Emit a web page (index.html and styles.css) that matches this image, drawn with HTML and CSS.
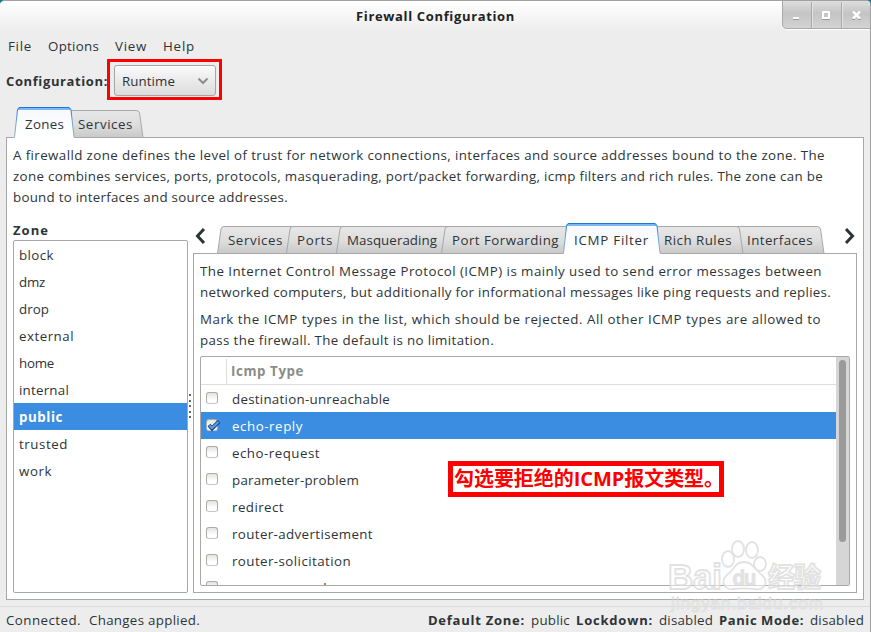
FILE: index.html
```html
<!DOCTYPE html>
<html lang="en">
<head>
<meta charset="utf-8">
<title>Firewall Configuration</title>
<link rel="stylesheet" href="styles.css">
</head>
<body>
<div class="window">
  <header class="titlebar">
    <h1 class="title"><span data-w="159">Firewall Configuration</span></h1>
    <svg class="controls" width="90" height="30" viewBox="0 0 90 30">
      <defs><linearGradient id="wc" x1="0" y1="0" x2="0" y2="1"><stop offset="0" stop-color="#dedede"/><stop offset=".45" stop-color="#c4c4c4"/><stop offset="1" stop-color="#d4d4d4"/></linearGradient></defs>
      <path d="M1.500 0V23Q1.500 28.500 6 28.500H90" fill="none" stroke="#fff"/>
      <path d="M1.500 0H90V27.500H6Q1.500 27.500 1.500 23Z" fill="url(#wc)"/>
      <path d="M1.500 0V23Q1.500 27.500 6 27.500H90" fill="none" stroke="#a9a9a9"/>
      <path d="M30.500 1V27M60.500 1V27" stroke="#a9a9a9"/><path d="M31.500 1V27M61.500 1V27" stroke="#e2e2e2"/>
      <path d="M12 18.500H18M41 18.500H49M71 18.500H74M77 18.500H80" stroke="#999"/>
      <path d="M12 17H18M42 11H48V17H42Z" fill="none" stroke="#fff" stroke-width="2"/>
      <path d="M72 10.500L79 17.500M79 10.500L72 17.500" stroke="#fff" stroke-width="2.400"/>
    </svg>
  </header>
  <nav class="menubar">
    <span class="menu file"><span data-w="24">File</span></span>
    <span class="menu options"><span data-w="51">Options</span></span>
    <span class="menu view"><span data-w="32">View</span></span>
    <span class="menu"><span data-w="32">Help</span></span>
  </nav>
  <div class="config">
    <b class="config-label"><span data-w="102">Configuration:</span></b>
    <div class="highlight">
      <div class="combo"><span data-w="53">Runtime</span>
        <svg width="12" height="8" viewBox="0 0 12 8"><path d="M1.500 1.500L6 6L10.500 1.500" fill="none" stroke="#8b8e8b" stroke-width="2"/></svg>
      </div>
    </div>
  </div>
  <div class="tabs outer-tabs">
    <svg class="tab-shapes" width="150" height="31" viewBox="0 0 150 31">
      <defs>
        <linearGradient id="tab" x1="0" y1="0" x2="0" y2="1"><stop offset="0" stop-color="#e7e7e7"/><stop offset=".5" stop-color="#dedede"/><stop offset="1" stop-color="#c9c9c9"/></linearGradient>
        <linearGradient id="act" x1="0" y1="0" x2="0" y2="1"><stop offset="0" stop-color="#f6f9fd"/><stop offset="1" stop-color="#fff"/></linearGradient>
        <linearGradient id="edge" gradientUnits="userSpaceOnUse" x1="0" y1="0" x2="0" y2="30"><stop offset="0" stop-color="#1b76d8"/><stop offset=".5" stop-color="#6aa5df"/><stop offset="1" stop-color="#a6aaa6"/></linearGradient>
      </defs>
      <path d="M65 3.500H130Q133 3.500 133.500 6L137 30.500H65Z" fill="url(#tab)" stroke="#a6aaa6"/>
      <path d="M8.500 31L11.500 3Q12 .500 14 .500H62Q64.500 .500 65 3L68 31Z" fill="url(#act)"/>
      <path d="M12 2H64" stroke="#7db8f5" stroke-width="2"/>
      <path d="M8.500 30L11.500 3Q12 .500 14 .500H62Q64.500 .500 65 3L68 30" fill="none" stroke="url(#edge)"/>
      <path d="M13 .500H63" stroke="#1b76d8"/>
    </svg>
    <span class="tab t-zones"><span data-w="39">Zones</span></span>
    <span class="tab"><span data-w="55">Services</span></span>
  </div>
  <main class="page">
    <p class="intro">
      <span data-w="812">A firewalld zone defines the level of trust for network connections, interfaces and source addresses bound to the zone. The</span><br>
      <span data-w="810">zone combines services, ports, protocols, masquerading, port/packet forwarding, icmp filters and rich rules. The zone can be</span><br>
      <span data-w="275">bound to interfaces and source addresses.</span>
    </p>
    <div class="split">
      <section class="zones">
        <b class="zone-label"><span data-w="36">Zone</span></b>
        <ul class="zone-list">
          <li><span data-w="35">block</span></li>
          <li><span data-w="26">dmz</span></li>
          <li><span data-w="30">drop</span></li>
          <li><span data-w="55">external</span></li>
          <li><span data-w="35">home</span></li>
          <li><span data-w="50">internal</span></li>
          <li class="selected"><span data-w="44">public</span></li>
          <li><span data-w="49">trusted</span></li>
          <li><span data-w="33">work</span></li>
        </ul>
      </section>
      <div class="handle"><i></i><i></i><i></i><i></i><i></i></div>
      <section class="details">
        <div class="tabs inner-tabs">
          <svg class="tab-shapes" width="664" height="31" viewBox="0 0 664 31">
            <g fill="url(#tab)" stroke="#a6aaa6">
              <path d="M543 3.500H624Q627 3.500 627.500 6L631 30.500H543Z"/>
              <path d="M460 3.500H543Q546 3.500 546.500 6L550 30.500H460Z"/>
              <path d="M24.500 30.500L28 6Q28.500 3.500 31 3.500H110V30.500Z"/>
              <path d="M93.500 30.500L97 6Q97.500 3.500 100 3.500H160V30.500Z"/>
              <path d="M143.500 30.500L147 6Q147.500 3.500 150 3.500H265V30.500Z"/>
              <path d="M248.500 30.500L252 6Q252.500 3.500 255 3.500H374V30.500Z"/>
            </g>
            <path d="M370.500 31L373.500 3Q374 .500 376 .500H461Q463.500 .500 464 3L467 31Z" fill="url(#act)"/>
            <path d="M374 2H463" stroke="#7db8f5" stroke-width="2"/>
            <path d="M370.500 30L373.500 3Q374 .500 376 .500H461Q463.500 .500 464 3L467 30" fill="none" stroke="url(#edge)"/>
            <path d="M375 .500H462" stroke="#1b76d8"/>
            <path d="M11 6L4.500 13L11 20M653 6L659.500 13L653 20" fill="none" stroke="#2e3436" stroke-width="3"/>
          </svg>
          <span class="tab i-services"><span data-w="55">Services</span></span>
          <span class="tab i-ports"><span data-w="36">Ports</span></span>
          <span class="tab i-masq"><span data-w="90">Masquerading</span></span>
          <span class="tab i-forward"><span data-w="107">Port Forwarding</span></span>
          <span class="tab i-icmp"><span data-w="75">ICMP Filter</span></span>
          <span class="tab i-rich"><span data-w="68">Rich Rules</span></span>
          <span class="tab"><span data-w="66">Interfaces</span></span>
        </div>
        <div class="subpage">
          <p><span data-w="622">The Internet Control Message Protocol (ICMP) is mainly used to send error messages between</span><br>
          <span data-w="631">networked computers, but additionally for informational messages like ping requests and replies.</span></p>
          <p><span data-w="621">Mark the ICMP types in the list, which should be rejected. All other ICMP types are allowed to</span><br>
          <span data-w="294">pass the firewall. The default is no limitation.</span></p>
          <div class="icmp">
            <div class="table">
              <div class="thead"><span data-w="73">Icmp Type</span></div>
              <div class="row"><i class="check"></i><span data-w="158">destination-unreachable</span></div>
              <div class="row selected"><i class="check"><svg class="tick" width="16" height="13" viewBox="0 0 16 13"><path d="M3 5L6 8.500L13 1.500" fill="none" stroke="#204a87" stroke-width="4"/><path d="M3.500 5.500L6 8L12.500 2" fill="none" stroke="#5b9fe6" stroke-width="2"/></svg></i><span data-w="71">echo-reply</span></div>
              <div class="row"><i class="check"></i><span data-w="88">echo-request</span></div>
              <div class="row"><i class="check"></i><span data-w="127">parameter-problem</span></div>
              <div class="row"><i class="check"></i><span data-w="52">redirect</span></div>
              <div class="row"><i class="check"></i><span data-w="141">router-advertisement</span></div>
              <div class="row"><i class="check"></i><span data-w="119">router-solicitation</span></div>
              <div class="row"><i class="check"></i><span data-w="100">source-quench</span></div>
            </div>
            <div class="scroll"><div class="thumb"></div></div>
          </div>
        </div>
      </section>
    </div>
  </main>
  <footer class="status">
    <span class="connected"><span data-w="75">Connected.</span></span>
    <span><span data-w="111">Changes applied.</span></span>
    <span class="modes"><b><span data-w="97">Default Zone:</span></b><span data-w="39">public</span><b><span data-w="77">Lockdown:</span></b><span data-w="54">disabled</span><b><span data-w="85">Panic Mode:</span></b><span data-w="54">disabled</span></span>
  </footer>
  <div class="note"><span data-w="270">勾选要拒绝的ICMP报文类型。</span></div>
  <svg class="watermark" width="170" height="80" viewBox="0 0 170 80">
    <g fill="#fff" fill-opacity=".65" stroke="#dedede" stroke-width="1.800">
      <ellipse cx="62" cy="22" rx="6" ry="8"/><ellipse cx="72" cy="12" rx="6" ry="8"/><ellipse cx="86" cy="13" rx="6" ry="8"/><ellipse cx="94" cy="27" rx="6" ry="7"/>
      <path d="M78 25C69 25 69 32 61 38C55 43 57 53 67 52C75 51 81 51 88 52C99 54 103 45 96 38C88 32 87 25 78 25Z"/>
      <text class="wm-logo" x="2" y="52" textLength="54" lengthAdjust="spacingAndGlyphs">Bai</text>
      <text class="wm-du" x="67" y="48" textLength="23">du</text>
      <text class="wm-cn" x="102" y="50" textLength="53">经验</text>
      <text class="wm-url" x="5" y="72" textLength="152">jingyan.baidu.com</text>
    </g>
  </svg>
</div>
<script src="fit.js"></script>
</body>
</html>
```
FILE: fit.js
```js
// Spread the glyphs of each label over its intended width.
document.querySelectorAll('[data-w]').forEach(function (el) {
  var natural = el.getBoundingClientRect().width;
  var gap = (Number(el.dataset.w) - natural) / el.textContent.length;
  el.style.letterSpacing = gap.toFixed(3) + 'px';
});
```
FILE: styles.css
```css
* { box-sizing: border-box; }
body { margin: 0; background: #197b8f; }
p, h1, ul { margin: 0; padding: 0; font-size: inherit; }
svg { display: block; }
.window {
  position: relative;
  display: flex;
  flex-direction: column;
  width: 871px;
  height: 632px;
  overflow: hidden;
  border-top: 1px solid #a1a1a1;
  border-right: 1px solid #a1a1a1;
  border-radius: 5px 5px 0 0;
  background: #ededed;
  color: #2e3436;
  font: 13.33px/21px "Open Sans", "Noto Sans", sans-serif;
  white-space: nowrap;
}
b, .title { font-size: 13px; }
.titlebar {
  display: grid;
  grid-template-columns: 356px 1fr 89px;
  height: 30px;
  background: linear-gradient(#fff, #ededed);
}
.title { grid-column: 2; line-height: 30px; color: #222; }
.menubar { display: flex; height: 27px; padding: 5px 8px; }
.file { width: 40px; }
.options { width: 67px; }
.view { width: 48px; }
.config { display: flex; height: 48px; padding: 1px 0 0 6px; }
.config-label { width: 101px; line-height: 44px; }
.highlight { width: 115px; height: 41px; padding: 3px 2px 2px 4px; border: 3px solid #f00; }
.combo {
  display: flex;
  align-items: center;
  justify-content: space-between;
  width: 102px;
  height: 31px;
  padding: 1px 6px 0 7px;
  border: 1px solid #a6a6a6;
  border-radius: 3px;
  background: linear-gradient(#fafafa, #dcdcdc);
}
.tabs { position: relative; display: flex; }
.tab-shapes { position: absolute; left: 0; top: 0; }
.tab { position: relative; }
.outer-tabs { height: 30px; margin: 1px 0 0 6px; padding: 7px 0 0 19px; z-index: 1; }
.t-zones { width: 53px; }
.page {
  height: 463px;
  margin: 0 6px;
  padding: 7px 6px 6px;
  border: 1px solid #a6aaa6;
  background: #fff;
}
.split { display: flex; height: 370px; margin-top: 15px; }
.zones { width: 175px; }
.zone-label { display: block; height: 17px; line-height: 14px; }
.zone-list { height: 353px; border: 1px solid #a6aaa6; border-radius: 2px; list-style: none; }
.zone-list li { height: 27px; padding-left: 5px; line-height: 28px; }
.selected { background: #3a8de0; color: #fff; }
.zone-list .selected { font-weight: bold; }
.handle { display: flex; flex-direction: column; width: 5px; gap: 3.5px; padding: 171px 0 0 1px; }
.handle i { width: 2px; height: 2px; background: #666; }
.details { width: 664px; }
.inner-tabs { height: 30px; padding: 7px 0 0 35px; z-index: 1; }
.i-services { width: 69px; }
.i-ports { width: 50px; }
.i-masq { width: 105px; }
.i-forward { width: 122px; }
.i-icmp { width: 90px; }
.i-rich { width: 83px; }
.subpage { height: 340px; padding: 7px 6px 6px; border: 1px solid #a6aaa6; }
.subpage p + p { margin-top: 6px; }
.icmp { display: flex; height: 230px; margin-top: 5px; border: 1px solid #a6aaa6; border-radius: 2px; }
.table { width: 635px; overflow: hidden; }
.thead {
  height: 28px;
  padding-left: 30px;
  border-bottom: 1px solid #ddd;
  background: linear-gradient(#ddd, #ddd) 25px 2px / 1px 25px no-repeat;
  color: #8b8d88;
  font-weight: bold;
  line-height: 29px;
}
.row { display: flex; height: 27px; padding-left: 5px; line-height: 28px; }
.check {
  width: 12px;
  height: 12px;
  margin: 7px 14px 0 0;
  border: 1px solid #a9afa3;
  border-bottom-color: #c5c8c2;
  border-radius: 3px;
  background: linear-gradient(#e3e4e2, #fff 70%);
}
.tick { margin-left: -1px; }
.scroll { width: 13px; padding: 3px 3px 0 3px; background: #d6d6d6; }
.thumb { width: 7px; height: 182px; border-radius: 4px; background: #999b9b; }
.status {
  display: flex;
  height: 26px;
  margin-top: 6px;
  padding: 3px 6px 0;
  border-top: 1px solid #dadada;
}
.connected { width: 83px; }
.modes { display: flex; gap: 6px; margin-left: auto; }
.note {
  position: absolute;
  left: 448px;
  top: 460px;
  width: 276px;
  height: 36px;
  padding-left: 1px;
  border: 5px solid #f00;
  color: #f00;
  font: bold 20px/26px "Open Sans", "Noto Sans CJK SC", sans-serif;
}
.watermark { position: absolute; left: 666px; top: 536px; opacity: .85; }
.wm-logo { font: bold 35px "Liberation Sans", sans-serif; }
.wm-du { font: 21px "Liberation Sans", sans-serif; }
.wm-cn { font: bold 27px "Noto Sans CJK SC", sans-serif; }
.wm-url { font: 17px "Liberation Sans", sans-serif; stroke-width: 1; }
```
